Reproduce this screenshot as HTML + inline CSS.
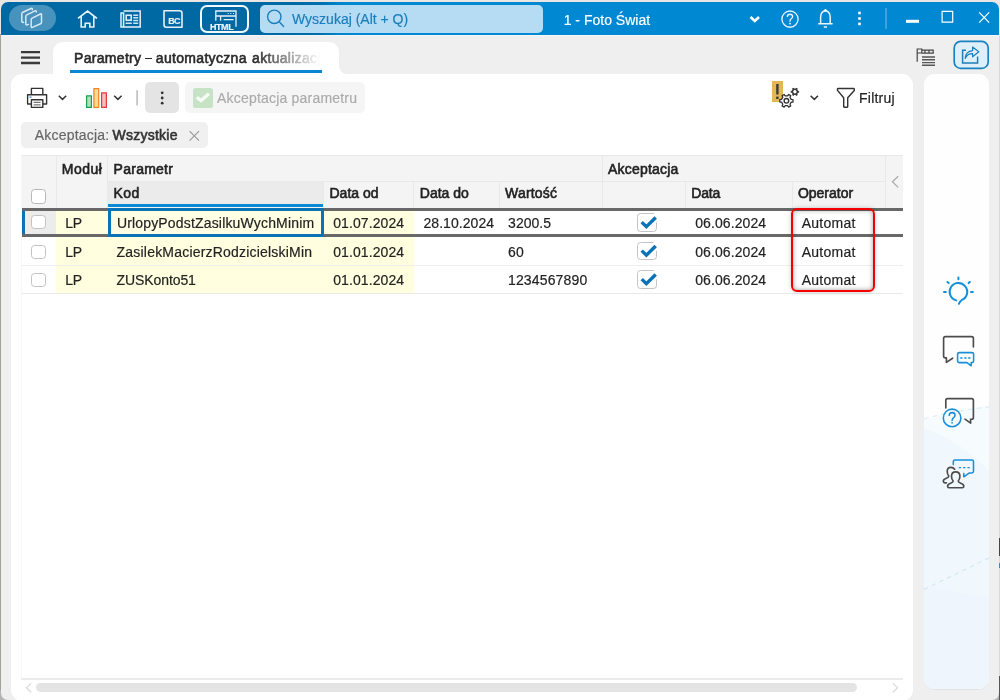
<!DOCTYPE html>
<html><head><meta charset="utf-8">
<style>
*{box-sizing:border-box;margin:0;padding:0}
html,body{width:1000px;height:700px;overflow:hidden;background:#e9e6e3;font-family:"Liberation Sans",sans-serif;}
#win{will-change:transform;position:absolute;left:1px;top:2px;width:998px;height:698px;background:#efefef;border-radius:7px 7px 7px 7px;overflow:hidden}
#win *{position:absolute}
#top{left:0;top:0;width:998px;height:33px;background:linear-gradient(90deg,#0069a4 0,#0069a4 292px,#006fad 318px,#0084cb 338px,#0089d2 350px,#0089d2 100%)}
#topline{left:0;top:33px;width:998px;height:1px;background:#f6f7f8}
#pill{left:8px;top:3px;width:47px;height:26px;border-radius:13px;background:#4793bd}
#search{left:259px;top:3px;width:283.2px;height:28px;border-radius:5px;background:#b5dcf3}
.t{white-space:nowrap;line-height:16px;font-size:14px;color:#222;-webkit-text-stroke:0.18px currentColor}
.m{-webkit-text-stroke:0.58px currentColor}
#htmlbtn{left:199px;top:3px;width:49px;height:28px;border:2px solid #f2f8fb;border-radius:7px}
#tab{left:52px;top:40px;width:286px;height:36px;background:#fff;border-radius:10px 10px 0 0}
#tabfade{left:255px;top:44px;width:70px;height:22px;background:linear-gradient(90deg,rgba(255,255,255,0),#fff 92%)}
#tabline{left:69px;top:67.9px;width:252.2px;height:3px;background:#0a87d3}
#panel{left:10px;top:72px;width:902px;height:626.5px;background:#fff;border-radius:11px}
#side{left:923.3px;top:72px;width:65px;height:615px;background:#fff;border-radius:11px;overflow:hidden;box-shadow:0 1px 0.5px #e3e3e3}
svg{overflow:visible}
.cb{width:15px;height:15px;border:1.5px solid #bdbdbd;border-radius:3.5px;background:#fff}
.hd{background:#f4f4f4}
.vl{width:1px;background:#e6e6e6}
.hl{height:1px;background:#ebebeb}
</style></head><body>
<div style="position:absolute;left:0;top:34px;width:1px;height:666px;background:#a3a39e"></div><div style="position:absolute;left:0;top:690px;width:1000px;height:10px;background:#b4b4b4"></div><div style="position:absolute;left:999px;top:36px;width:1px;height:664px;background:#d8d8d8"></div><div style="position:absolute;left:999px;top:538px;width:1px;height:18px;background:#444"></div><div style="position:absolute;left:999px;top:563px;width:1px;height:5px;background:#2a8fd0"></div><div style="position:absolute;left:999px;top:676px;width:1px;height:24px;background:#555"></div>
<div id="win">
<div id="top"></div><div id="topline"></div>
<div id="pill"></div>
<div id="htmlbtn"></div>
<div id="search"></div>
<div class="t" style="left:291px;top:9px;color:#1a7fbc">Wyszukaj (Alt + Q)</div>
<div class="t" style="left:562.7px;top:9.5px;color:#fff">1 - Foto Świat</div>
<div class="t" style="left:209px;top:20.3px;color:#eef6fa;font-size:9px;font-weight:bold;line-height:10px;letter-spacing:-0.45px">HTML</div>
<div class="t" style="left:167.3px;top:14px;color:#e4f0f6;font-size:9px;font-weight:bold;line-height:10px;letter-spacing:-0.7px">BC</div>
<!-- top icons svg in window coords (offset -1,-2) -->
<svg id="topsvg" style="left:-1px;top:-2px" width="1000" height="80" viewBox="0 0 1000 80" fill="none" stroke="#e6f1f7" stroke-width="1.5" stroke-linecap="round" stroke-linejoin="round">
 <!-- stacked cards -->
 <g stroke="#d6e8f2" stroke-width="1.5">
  <path d="M32.2 18.2 L40.4 14 Q41.5 13.5 41.5 14.8 V22.4 Q41.5 23.3 40.6 23.7 L32.4 27.4 Q31.2 27.9 31.2 26.6 V19.6 Q31.2 18.7 32.2 18.2Z"/>
  <path d="M36.3 12 V11.6 Q36.2 10.4 35 10.9 L26.8 14.9 Q25.8 15.4 25.8 16.4 V23.8 Q25.8 25.2 27 24.9 L28.4 24.4"/>
  <path d="M32.4 9.8 V9.2 Q32.3 8 31.1 8.5 L22.8 12.2 Q21.8 12.7 21.8 13.7 V21.2 Q21.8 22.4 23 22.4 L23.6 22.3"/>
 </g>
 <!-- home -->
 <path d="M78.6 18 L87.5 11 L96.4 18 M81.2 16.6 V27 H85.2 V23.2 H89.8 V27 H93.8 V16.6" stroke-linecap="square" stroke-linejoin="miter" stroke-width="1.6"/>
 <!-- news -->
 <g stroke-width="1.5" stroke-linecap="butt" stroke-linejoin="miter">
  <path d="M123.6 11 H140.2 V27 H121 V13 H123.6 V27"/>
  <rect x="126.2" y="15.2" width="5" height="5"/>
  <path d="M133.2 15.2 H138.2 M133.2 17.8 H138.2 M133.2 20.4 H138.2 M125.6 23.2 H131.8 M133.2 23.2 H138.2" stroke="#cfe3ef"/>
 </g>
 <!-- BC box -->
 <path d="M164 10.8 H179.6 Q182 10.8 182 13.2 V27.2 H166.4 Q164 27.2 164 24.8 Z" stroke-width="1.6"/>
 <!-- html icon -->
 <g stroke-width="1.3" stroke-linecap="butt" stroke-linejoin="miter">
  <path d="M215.8 20.8 V11 H236 V26.8 M215.8 16 H236 M220.6 16 V20.8 M223.6 19.6 H233.6"/>
  <path d="M227.6 13.5 h1 M230.3 13.5 h1 M233 13.5 h1" stroke-width="1.2"/>
 </g>
 <!-- magnifier -->
 <g stroke="#1a7fbc" stroke-width="1.4"><circle cx="274.3" cy="16.8" r="6.7"/><path d="M279.2 21.8 L283.6 26.4"/></g>
 <!-- chevron firm -->
 <path d="M750.5 17 L754.8 21 L759 17" stroke="#fff" stroke-width="2.6" stroke-linecap="butt" stroke-linejoin="miter"/>
 <!-- help -->
 <circle cx="790" cy="19.1" r="8.1" stroke="#e6f3fb" stroke-width="1.4"/>
 <path d="M787.4 16.6 Q787.4 14.2 790 14.2 Q792.6 14.2 792.6 16.4 Q792.6 17.8 791.2 18.8 Q790 19.7 790 21.2" stroke="#e6f3fb" stroke-width="1.4"/>
 <circle cx="790" cy="23.6" r="0.9" fill="#fff" stroke="none"/>
 <!-- bell -->
 <path d="M818.2 23.8 H832.6 M820.6 23.6 V17.2 C820.6 13.2 822.4 11.2 825.4 10.7 C828.4 11.2 830.2 13.2 830.2 17.2 V23.6 M823.8 26.9 H827" stroke="#edf6fc" stroke-width="1.5" stroke-linecap="butt"/>
 <path d="M824.2 10.6 L825.4 9 L826.6 10.6Z" fill="#fff" stroke="#fff" stroke-width="0.8"/>
 <!-- dots -->
 <g fill="#fff" stroke="none"><rect x="858.2" y="11.7" width="2.6" height="2.6"/><rect x="858.2" y="17.2" width="2.6" height="2.6"/><rect x="858.2" y="22.6" width="2.6" height="2.6"/></g>
 <!-- separator -->
 <rect x="885" y="8" width="2" height="21" fill="#3aa3dd" stroke="none"/>
 <!-- min max close -->
 <rect x="906" y="19.8" width="13" height="3" fill="#fff" stroke="none"/>
 <rect x="942.1" y="11.4" width="10.6" height="10.8" stroke="#fff" stroke-width="1.2"/>
 <path d="M979.2 12.4 L989.2 22.6 M989.2 12.4 L979.2 22.6" stroke="#fff" stroke-width="1.2" stroke-linecap="butt"/>
 <!-- hamburger -->
 <path d="M21 52.2 H40 M21 57.6 H40 M21 63 H40" stroke="#3a3a3a" stroke-width="2.3" stroke-linecap="butt"/>
 <!-- list icon -->
 <g stroke="#444" stroke-width="1.2" stroke-linecap="butt" stroke-linejoin="miter">
  <path d="M917.2 61.8 V49 H921.8 V53 H917.2 M921.8 50.2 H933.2 V53.2 H921.8 M925 50.2 V53.2 M929 50.2 V53.2"/>
  <path d="M922 57 H935 M922 59.8 H935 M922 62.6 H935 M922 65.2 H935" stroke-width="1.4" stroke="#555"/>
 </g>
 <!-- share button -->
 <rect x="954.2" y="41.4" width="34" height="27" rx="6.5" fill="#dfeffa" stroke="#1a82bf" stroke-width="1.7"/>
 <g stroke="#1a7fbc" stroke-width="1.5" stroke-linecap="butt" stroke-linejoin="miter">
  <path d="M966 50.2 H962.6 V63 H977.6 V56.6"/>
  <path d="M965.2 58.4 Q965.6 51.2 972.6 50.6 V47 L978.8 51.8 L972.6 56.8 V53.6 Q967.6 53.4 965.2 58.4Z" stroke-width="1.2" stroke-linejoin="round"/>
 </g>
</svg>
<div id="tab"></div><div style="left:337.8px;top:62px;width:10px;height:10px;background:#fff"></div><div style="left:337.8px;top:61.6px;width:11px;height:10px;background:#efefef;border-bottom-left-radius:8px"></div>
<div class="t m" id="tabtxt" style="left:73px;top:48px;width:250px;overflow:hidden;letter-spacing:0.31px;word-spacing:1.1px;color:#2a2a2a">Parametry<span style="position:static;display:inline-block;width:6.1px;height:1.9px;background:#2a2a2a;margin:0 4.3px 0 4.1px;vertical-align:3.6px"></span>automatyczna aktualizacja</div>
<div id="tabfade"></div>
<div id="tabline"></div>
<div id="panel"></div>
<div id="side"><svg style="left:0;top:0" width="66" height="616" viewBox="924 74 66 616">
<rect x="924" y="74" width="66" height="616" fill="#fefeff"/>
<path d="M924 420 Q955 412 990 405 V690 H924Z" fill="#f6fbfe"/>
<path d="M924 428 Q960 440 990 472 V690 H924Z" fill="#f1f8fd"/>
<path d="M924 588 Q960 591 990 599 V690 H924Z" fill="#eef5fd"/>
<path d="M924 419 Q955 410 990 407" stroke="#d6eaf7" stroke-width="1" stroke-dasharray="5 4" fill="none"/>
<path d="M924 589.5 L990 557.5" stroke="#d0e8f7" stroke-width="1.2" stroke-dasharray="4.5 4" fill="none"/>
</svg></div>
<!-- toolbar -->
<div style="left:144px;top:80px;width:34px;height:31px;background:#e4e4e4;border-radius:5px"></div>
<div style="left:184px;top:80px;width:180px;height:31px;background:#f5f5f5;border-radius:5px"></div>
<div style="left:192px;top:86px;width:20px;height:20px;background:#c6e3c6;border-radius:2.5px"></div>
<div class="t" style="left:216px;top:88px;color:#ababab;letter-spacing:0.2px">Akceptacja parametru</div>
<div class="t" style="left:858.1px;top:88px;color:#222;letter-spacing:0.2px">Filtruj</div>
<div style="left:771px;top:79px;width:11px;height:21px;background:#e4b755"></div>
<!-- chip -->
<div style="left:20px;top:120px;width:187px;height:26px;background:#f0f0f0;border-radius:5px"></div>
<div class="t" style="left:33.8px;top:125px;color:#666;letter-spacing:0.2px">Akceptacja:</div>
<div class="t m" style="left:111.5px;top:125px;color:#333;letter-spacing:0.25px">Wszystkie</div>
<div style="left:20px;top:153px;width:882px;height:54px;background:#f4f4f4"></div>
<div style="left:20px;top:153px;width:882px;height:1px;background:#e8e8e8"></div>
<div style="left:107px;top:180px;width:215px;height:23px;background:#ebebeb"></div>
<div style="left:55px;top:154px;width:1px;height:53px;background:#e9e9e9"></div>
<div style="left:106px;top:154px;width:1px;height:53px;background:#e9e9e9"></div>
<div style="left:322px;top:180px;width:1px;height:27px;background:#e9e9e9"></div>
<div style="left:412px;top:180px;width:1px;height:27px;background:#e9e9e9"></div>
<div style="left:497.5px;top:180px;width:1px;height:27px;background:#e9e9e9"></div>
<div style="left:601px;top:154px;width:1px;height:53px;background:#e9e9e9"></div>
<div style="left:683.8px;top:180px;width:1px;height:27px;background:#e9e9e9"></div>
<div style="left:791px;top:180px;width:1px;height:27px;background:#e9e9e9"></div>
<div style="left:883.8px;top:154px;width:1px;height:53px;background:#e9e9e9"></div>
<div style="left:107px;top:179px;width:778px;height:1px;background:#e9e9e9"></div>
<div style="left:107px;top:202.3px;width:215px;height:2.7px;background:#0a89d5"></div>
<div style="left:55px;top:209px;width:52px;height:83px;background:#ffffe0"></div>
<div style="left:107px;top:209px;width:215px;height:83px;background:#ffffe0"></div>
<div style="left:322px;top:209px;width:90.5px;height:83px;background:#ffffe0"></div>
<div style="left:24px;top:209px;width:31px;height:23px;background:#ececec"></div>
<div style="left:20px;top:262.8px;width:882px;height:1px;background:#eeeeee"></div>
<div style="left:20px;top:291.3px;width:882px;height:1px;background:#e9e9e9"></div>
<div style="left:20px;top:206.1px;width:882px;height:2.6px;background:#686868"></div>
<div style="left:20px;top:232px;width:882px;height:2.5px;background:#686868"></div>
<div style="left:21px;top:208.8px;width:3.4px;height:23.4px;background:#0a73b7"></div>
<div style="left:106.9px;top:206.2px;width:216.1px;height:28.5px;border:3.9px solid #0873b5;background:#ffffe4"></div>
<div class="t m" style="left:60.8px;top:159px;letter-spacing:0.5px">Moduł</div>
<div class="t m" style="left:112.6px;top:159px;letter-spacing:0.25px">Parametr</div>
<div class="t m" style="left:607px;top:159px;letter-spacing:0.2px">Akceptacja</div>
<div class="t m" style="left:112.6px;top:183px;letter-spacing:0.4px">Kod</div>
<div class="t m" style="left:328.5px;top:183px;">Data od</div>
<div class="t m" style="left:418.8px;top:183px;">Data do</div>
<div class="t m" style="left:504px;top:183px;letter-spacing:0.2px">Wartość</div>
<div class="t m" style="left:690.3px;top:183px;letter-spacing:-0.2px">Data</div>
<div class="t m" style="left:796.9px;top:183px;">Operator</div>
<div style="left:30px;top:187.2px;width:14.6px;height:14.6px;border:1.5px solid #b8b8b8;border-radius:3.5px;background:#fff"></div>
<div style="left:30.2px;top:213px;width:14.4px;height:14.4px;border:1.5px solid #c2c2c2;border-radius:3.5px;background:#fff"></div>
<div class="t" style="left:64.3px;top:213.1px;letter-spacing:-0.3px">LP</div>
<div class="t" style="left:115.9px;top:213.1px;letter-spacing:0.17px">UrlopyPodstZasilkuWychMinim</div>
<div class="t" style="left:332.2px;top:213.1px;letter-spacing:0.1px">01.07.2024</div>
<div class="t" style="left:422.5px;top:213.1px;letter-spacing:0.05px">28.10.2024</div>
<div class="t" style="left:507.1px;top:213.1px;">3200.5</div>
<div style="left:636.3px;top:211.4px;width:19.6px;height:18.4px;border:1.8px solid #c4c4c4;border-radius:3.5px;background:#fff"></div>
<div class="t" style="left:694.2px;top:213.1px;letter-spacing:0.1px">06.06.2024</div>
<div class="t" style="left:800.7px;top:213.1px;letter-spacing:0.25px">Automat</div>
<div style="left:30.2px;top:242.6px;width:14.4px;height:14.4px;border:1.5px solid #c2c2c2;border-radius:3.5px;background:#fff"></div>
<div class="t" style="left:64.3px;top:241.6px;letter-spacing:-0.3px">LP</div>
<div class="t" style="left:115.6px;top:241.6px;letter-spacing:0.2px">ZasilekMacierzRodzicielskiMin</div>
<div class="t" style="left:332.2px;top:241.6px;letter-spacing:0.1px">01.01.2024</div>
<div class="t" style="left:507.1px;top:241.6px;">60</div>
<div style="left:636.3px;top:239.9px;width:19.6px;height:18.4px;border:1.8px solid #c4c4c4;border-radius:3.5px;background:#fff"></div>
<div class="t" style="left:694.2px;top:241.6px;letter-spacing:0.1px">06.06.2024</div>
<div class="t" style="left:800.7px;top:241.6px;letter-spacing:0.25px">Automat</div>
<div style="left:30.2px;top:271px;width:14.4px;height:14.4px;border:1.5px solid #c2c2c2;border-radius:3.5px;background:#fff"></div>
<div class="t" style="left:64.3px;top:270px;letter-spacing:-0.3px">LP</div>
<div class="t" style="left:115.6px;top:270px;letter-spacing:-0.1px">ZUSKonto51</div>
<div class="t" style="left:332.2px;top:270px;letter-spacing:0.1px">01.01.2024</div>
<div class="t" style="left:507px;top:270px;letter-spacing:0.15px">1234567890</div>
<div style="left:636.3px;top:268.4px;width:19.6px;height:18.4px;border:1.8px solid #c4c4c4;border-radius:3.5px;background:#fff"></div>
<div class="t" style="left:694.2px;top:270px;letter-spacing:0.1px">06.06.2024</div>
<div class="t" style="left:800.7px;top:270px;letter-spacing:0.25px">Automat</div>
<div style="left:789.7px;top:206.3px;width:84.7px;height:83.8px;border:2.1px solid #f40000;border-radius:6px;box-shadow:inset 0 0 5px rgba(0,0,0,0.38),0 0 4px rgba(0,0,0,0.22)"></div>
<div style="left:20px;top:676.2px;width:882px;height:1.7px;background:#ebebeb"></div><div style="left:20px;top:153px;width:1px;height:524px;background:#f7f7f7"></div>
<div style="left:35px;top:681px;width:821px;height:9px;background:#e4e4e4;border-radius:4.5px"></div>
<svg id="mainsvg" style="left:-1px;top:-2px" width="1000" height="700" viewBox="0 0 1000 700" fill="none" stroke="#333" stroke-width="1.4" stroke-linecap="round" stroke-linejoin="round">
 <!-- printer -->
 <g stroke="#333" stroke-width="1.4" stroke-linejoin="round" stroke-linecap="butt">
  <path d="M31.4 94.6 V88.4 H42.8 V94.6"/>
  <path d="M31.2 104 H27.6 V94.8 H46.6 V104 H43"/>
  <path d="M31.4 99.8 H42.8 V107.4 H31.4 Z"/>
  <path d="M33.6 102.4 H40.6 M33.6 104.8 H40.6" stroke="#777" stroke-width="1.2"/>
  <path d="M29.4 97.2 H31.6" stroke="#2b9be6" stroke-width="1.2"/>
 </g>
 <path d="M58.8 95.8 L62.5 99.4 L66.2 95.8" stroke="#333" stroke-width="1.5" stroke-linecap="butt" stroke-linejoin="miter"/>
 <!-- bars -->
 <rect x="86.6" y="95.8" width="4.8" height="11.6" fill="#b7dfbb" stroke="#18a04a" stroke-width="1.2"/>
 <rect x="93.9" y="88.6" width="4.8" height="18.8" fill="#f9dc8c" stroke="#ef8427" stroke-width="1.2"/>
 <rect x="101.6" y="92.8" width="4.8" height="14.6" fill="#f4bcbc" stroke="#e63a3a" stroke-width="1.2"/>
 <path d="M114.2 95.8 L117.9 99.4 L121.6 95.8" stroke="#333" stroke-width="1.5" stroke-linecap="butt" stroke-linejoin="miter"/>
 <rect x="136.4" y="90.2" width="1.4" height="15.2" fill="#b4b4b4" stroke="none"/>
 <g fill="#333" stroke="none"><circle cx="162.2" cy="92.8" r="1.4"/><circle cx="162.2" cy="98" r="1.4"/><circle cx="162.2" cy="103.2" r="1.4"/></g>
 <!-- check in green -->
 <path d="M196.8 97.2 L201 100.6 L209 93.8" stroke="#f6fbf6" stroke-width="3.3" stroke-linecap="butt" stroke-linejoin="miter"/>
 <!-- exclamation -->
 <path d="M777.4 84 V94.6" stroke="#3a3a3a" stroke-width="2.4" stroke-linecap="butt"/>
 <rect x="776.2" y="96.6" width="2.4" height="2.4" fill="#3a3a3a" stroke="none"/>
 <!-- gears -->
 <g stroke="#333" stroke-width="1.3" stroke-linejoin="round">
  <path d="M791.20 99.41 L792.99 99.61 L792.99 101.99 L791.20 102.19 L790.01 104.26 L790.72 105.92 L788.67 107.10 L787.59 105.66 L785.21 105.66 L784.13 107.10 L782.08 105.92 L782.79 104.26 L781.60 102.19 L779.81 101.99 L779.81 99.61 L781.60 99.41 L782.79 97.34 L782.08 95.68 L784.13 94.50 L785.21 95.94 L787.59 95.94 L788.67 94.50 L790.72 95.68 L790.01 97.34 Z" fill="#fff"/>
  <circle cx="786.4" cy="100.8" r="2.3" stroke-width="1.4"/>
  <path d="M798.04 90.78 L799.11 90.91 L799.11 92.69 L798.04 92.82 L797.35 94.01 L797.78 95.00 L796.23 95.89 L795.59 95.03 L794.21 95.03 L793.57 95.89 L792.02 95.00 L792.45 94.01 L791.76 92.82 L790.69 92.69 L790.69 90.91 L791.76 90.78 L792.45 89.59 L792.02 88.60 L793.57 87.71 L794.21 88.57 L795.59 88.57 L796.23 87.71 L797.78 88.60 L797.35 89.59 Z" fill="#3a3a3a" stroke="none"/>
  <circle cx="794.9" cy="91.8" r="1.7" fill="#fff" stroke="none"/>
 </g>
 <path d="M810.6 95.8 L814.3 99.4 L818 95.8" stroke="#333" stroke-width="1.5" stroke-linecap="butt" stroke-linejoin="miter"/>
 <!-- funnel -->
 <path d="M838.2 88.5 H853.6 Q854.3 88.5 854.3 89.2 V90.4 L847.7 97.7 V106.6 Q847.7 107.2 847.1 107.2 H844.3 Q843.7 107.2 843.7 106.6 V97.7 L837.5 90.4 V89.2 Q837.5 88.5 838.2 88.5Z" stroke="#333" stroke-width="1.45"/>
<path d="M649.5 223.6 L655.8 217.4" stroke="#fff" stroke-width="8" stroke-linecap="round"/>
<path d="M641.7 222.1 L646.4 226.7 L655.7 217.5" stroke="#0a73b7" stroke-width="3.4" stroke-linecap="butt" stroke-linejoin="miter"/>
<path d="M649.5 252.1 L655.8 245.9" stroke="#fff" stroke-width="8" stroke-linecap="round"/>
<path d="M641.7 250.6 L646.4 255.2 L655.7 246" stroke="#0a73b7" stroke-width="3.4" stroke-linecap="butt" stroke-linejoin="miter"/>
<path d="M649.5 280.6 L655.8 274.4" stroke="#fff" stroke-width="8" stroke-linecap="round"/>
<path d="M641.7 279.1 L646.4 283.7 L655.7 274.5" stroke="#0a73b7" stroke-width="3.4" stroke-linecap="butt" stroke-linejoin="miter"/>
<path d="M898.2 176.2 L892.4 181.8 L898.2 187.4" stroke="#aaa" stroke-width="1.2" stroke-linecap="butt" stroke-linejoin="miter"/>
<path d="M31.2 683.4 L26.4 687.8 L31.2 692.2" stroke="#dadada" stroke-width="1.2" stroke-linecap="butt" stroke-linejoin="miter"/>
<path d="M892.8 683.4 L897.6 687.8 L892.8 692.2" stroke="#dadada" stroke-width="1.2" stroke-linecap="butt" stroke-linejoin="miter"/>

 <!-- sidebar icons -->
 <g stroke="#1390da" stroke-width="2" stroke-linecap="round" fill="none">
  <path d="M956.3 300.4 A8.8 8.8 0 1 1 962 299.9 Q960 300.8 958.9 303.8"/>
  <path d="M958.4 277.6 V279.3 M944 291.9 H945.8 M971 291.9 H972.8 M947.4 282 L948.7 283.1 M969.8 282 L968.6 283.1"/>
 </g>
 <g stroke="#4c4c4c" stroke-width="1.65" stroke-linecap="round" stroke-linejoin="round" fill="none">
  <path d="M973.4 347 V338.4 Q973.4 336.6 971.6 336.6 H945.4 Q943.6 336.6 943.6 338.4 V356 Q943.6 357.8 945.4 357.8 H946.4 V362.4 L952.6 358.2"/>
  <path d="M945.8 408 V400.4 Q945.8 398.6 947.6 398.6 H971.6 Q973.4 398.6 973.4 400.4 V417.4 Q973.4 419.2 971.6 419.2 H970.6 V423.2 L965 419.2"/>
 </g>
 <g stroke="#1a8fd8" stroke-width="1.55" stroke-linecap="round" stroke-linejoin="round" fill="none">
  <path d="M959.2 352.6 H972 Q973.6 352.6 973.6 354.2 V361 Q973.6 362.6 972 362.6 H971.2 V365.8 L967 362.6 H959.2 Q957.6 362.6 957.6 361 V354.2 Q957.6 352.6 959.2 352.6Z"/>
  <path d="M960.2 357.9 H971" stroke-dasharray="2.3 1.7" stroke-linecap="butt" stroke-width="1.5"/>
  <circle cx="952.1" cy="417.9" r="8.8"/>
  <path d="M949.2 415.4 Q949.2 412.6 952.1 412.6 Q955 412.6 955 415.2 Q955 416.8 953.4 417.8 Q952.1 418.8 952.1 420.4"/>
  <path d="M953.3 464.6 V461.6 Q953.3 459.9 955 459.9 H971.8 Q973.5 459.9 973.5 461.6 V471.2 Q973.5 472.9 971.8 472.9 H969.4 L963.8 476.8 V473.6"/>
  <path d="M958.8 467.6 H969.8" stroke-dasharray="2.3 2" stroke-linecap="butt" stroke-width="1.3"/>
 </g>
 <circle cx="952.1" cy="422.8" r="0.9" fill="#1a8fd8" stroke="none"/>
 <g stroke="#4c4c4c" stroke-width="1.65" stroke-linecap="round" stroke-linejoin="round" fill="none">
  <path d="M955.7 471.8 Q959.9 471.8 959.9 476.2 Q959.9 479.2 958.2 481 Q958.3 482.4 960.8 483.2 Q963.8 484.2 963.8 486.2 Q963.8 487.7 962.4 487.7 H949 Q947.6 487.7 947.6 486.2 Q947.6 484.2 950.6 483.2 Q953.1 482.4 953.2 481 Q951.5 479.2 951.5 476.2 Q951.5 471.8 955.7 471.8Z"/>
  <path d="M954.7 469.2 Q953.4 467.3 950.9 467.3 Q947.2 467.3 947.2 471.4 Q947.2 474.2 948.8 476 Q948.8 477.4 946.4 478.2 Q943.2 479.2 943.3 481.2 Q943.4 482.8 945 482.8 H946.4"/>
 </g>
 <!-- chip x -->
 <path d="M189.6 131.2 L199 140.6 M199 131.2 L189.6 140.6" stroke="#9a9a9a" stroke-width="1.2" stroke-linecap="butt"/>
</svg>

</div>
</body></html>
